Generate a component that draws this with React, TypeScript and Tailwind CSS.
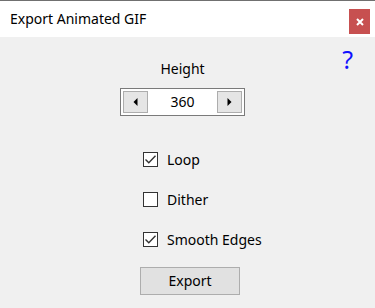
import { useState } from "react";

function Arrow({ dir }: { dir: "left" | "right" }) {
  return (
    <svg width="5" height="8" viewBox="0 0 5 8">
      {dir === "left" ? (
        <polygon points="4.5,0 4.5,8 0.5,4" fill="#000" />
      ) : (
        <polygon points="0.5,0 0.5,8 4.5,4" fill="#000" />
      )}
    </svg>
  );
}

function Check({ label, checked }: { label: string; checked: boolean }) {
  return (
    <div className="flex h-[15px] items-center gap-[9px]">
      <div className="flex h-[15px] w-[15px] items-center justify-center border border-[#333333] bg-white">
        {checked && (
          <svg width="13" height="13" viewBox="0 0 13 13">
            <polyline points="1.5,6.5 4.8,9.8 11.5,2.8" fill="none" stroke="#333333" strokeWidth="1.4" />
          </svg>
        )}
      </div>
      <span className="text-[14px] leading-[20px] text-black">{label}</span>
    </div>
  );
}

export default function App() {
  const [height] = useState(360);

  return (
    <div className="flex h-[308px] w-[375px] flex-col border-t border-[#707070] bg-[#f0f0f0] font-['Noto_Sans',sans-serif] text-black">
      {/* title bar */}
      <div className="flex h-[36px] items-start justify-between bg-white pl-[10px] pr-[5px]">
        <span className="mt-[8px] text-[14px] leading-[20px]">Export Animated GIF</span>
        <button className="mt-[8px] flex h-[25px] w-[21px] items-center justify-center bg-[#c75050]">
          <svg width="8" height="8" viewBox="0 0 8 8">
            <path d="M1 1 L7 7 M7 1 L1 7" stroke="#fff" strokeWidth="2" />
          </svg>
        </button>
      </div>

      {/* body */}
      <div className="relative flex flex-1 flex-col">
        <span className="absolute right-[22px] top-[7px] text-[25px] leading-[30px] text-[#1010ff]">?</span>

        <div className="ml-[120px] mt-[22px] flex w-[125px] flex-col items-center">
          <span className="text-[14px] leading-[20px]">Height</span>

          <div className="mt-[9px] flex h-[28px] w-[125px] items-center border border-[#7a7a7a] bg-white p-[2px]">
            <button className="flex h-[22px] w-[25px] items-center justify-center border border-[#adadad] bg-[#e5e5e5]">
              <Arrow dir="left" />
            </button>
            <span className="flex-1 text-center text-[14px] leading-[20px]">{height}</span>
            <button className="flex h-[22px] w-[25px] items-center justify-center border border-[#adadad] bg-[#e5e5e5]">
              <Arrow dir="right" />
            </button>
          </div>
        </div>

        <div className="ml-[143px] mt-[36px] flex flex-col gap-[25px]">
          <Check label="Loop" checked />
          <Check label="Dither" checked={false} />
          <Check label="Smooth Edges" checked />
        </div>

        <button className="ml-[140px] mt-[20px] h-[28px] w-[100px] border border-[#adadad] bg-[#e1e1e1] text-[14px] leading-[20px]">
          Export
        </button>
      </div>
    </div>
  );
}
